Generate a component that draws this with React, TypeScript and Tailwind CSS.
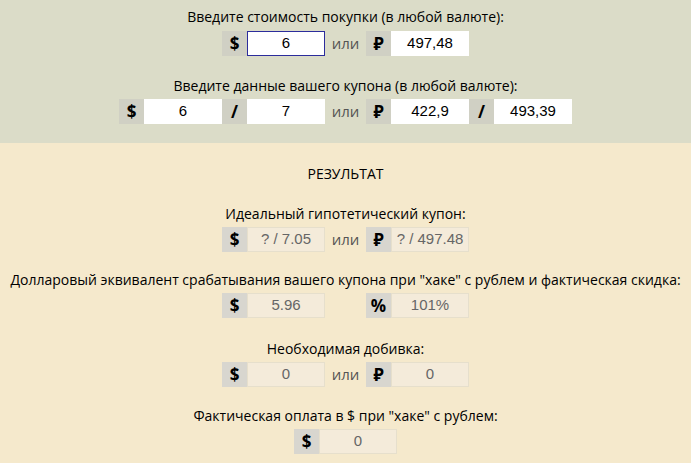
import React from "react";

const labelFont = { fontFamily: '"Open Sans", "Noto Sans", sans-serif' };

function Addon({ children, result }: { children: React.ReactNode; result?: boolean }) {
  return (
    <div
      className={`w-[25px] h-[25px] flex items-center justify-center font-bold text-[17px] text-black ${
        result ? "bg-[#d8d6cf]" : "bg-[#d0d0c4]"
      }`}
      style={labelFont}
    >
      {children}
    </div>
  );
}

function Field({ value, focused, result }: { value: string; focused?: boolean; result?: boolean }) {
  let cls = "bg-white text-black border border-white";
  if (focused) cls = "bg-white text-black border border-[#2c2c9c]";
  if (result) cls = "bg-[#f4ebda] text-[#666666] border border-[#e6dfcc]";
  return (
    <div
      className={`w-[78px] h-[25px] flex items-center justify-center text-[15px] ${cls}`}
      style={{ fontFamily: '"Liberation Sans Narrow", "Liberation Sans", Arial, sans-serif' }}
    >
      {value}
    </div>
  );
}

function Or({ text = "или" }: { text?: string }) {
  return (
    <div className="w-[41px] flex items-center justify-center text-[15px] text-[#555555]" style={labelFont}>
      {text}
    </div>
  );
}

function Label({ children }: { children: React.ReactNode }) {
  return (
    <div className="text-center text-[14px] leading-[20px] text-black" style={labelFont}>
      {children}
    </div>
  );
}

export default function App() {
  return (
    <div className="w-[691px] h-[463px] overflow-hidden" style={labelFont}>
      <div className="bg-[#dbdcc8] h-[143px] pt-[7px] flex flex-col items-center">
        <Label>Введите стоимость покупки (в любой валюте):</Label>
        <div className="flex mt-[4px]">
          <Addon>$</Addon>
          <Field value="6" focused />
          <Or />
          <Addon>₽</Addon>
          <Field value="497,48" />
        </div>
        <div className="mt-[20px]">
          <Label>Введите данные вашего купона (в любой валюте):</Label>
        </div>
        <div className="flex mt-[3px]">
          <Addon>$</Addon>
          <Field value="6" />
          <Addon>/</Addon>
          <Field value="7" />
          <Or />
          <Addon>₽</Addon>
          <Field value="422,9" />
          <Addon>/</Addon>
          <Field value="493,39" />
        </div>
      </div>
      <div className="bg-[#f5e9cc] h-[320px] pt-[21px] flex flex-col items-center">
        <Label>РЕЗУЛЬТАТ</Label>
        <div className="mt-[20px]">
          <Label>Идеальный гипотетический купон:</Label>
        </div>
        <div className="flex mt-[3px]">
          <Addon result>$</Addon>
          <Field value="? / 7.05" result />
          <Or />
          <Addon result>₽</Addon>
          <Field value="? / 497.48" result />
        </div>
        <div className="mt-[18px]">
          <Label>Долларовый эквивалент срабатывания вашего купона при "хаке" с рублем и фактическая скидка:</Label>
        </div>
        <div className="flex mt-[3px]">
          <Addon result>$</Addon>
          <Field value="5.96" result />
          <Or text="" />
          <Addon result>%</Addon>
          <Field value="101%" result />
        </div>
        <div className="mt-[21px]">
          <Label>Необходимая добивка:</Label>
        </div>
        <div className="flex mt-[3px]">
          <Addon result>$</Addon>
          <Field value="0" result />
          <Or />
          <Addon result>₽</Addon>
          <Field value="0" result />
        </div>
        <div className="mt-[19px]">
          <Label>Фактическая оплата в $ при "хаке" с рублем:</Label>
        </div>
        <div className="flex mt-[3px]">
          <Addon result>$</Addon>
          <Field value="0" result />
        </div>
      </div>
    </div>
  );
}
